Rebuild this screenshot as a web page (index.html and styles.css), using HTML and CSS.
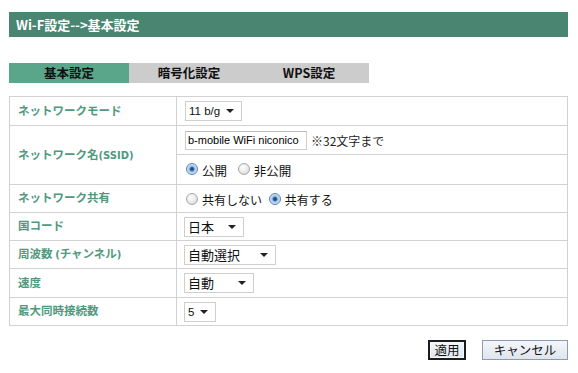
FILE: index.html
```html
<!DOCTYPE html>
<html lang="ja">
<head>
<meta charset="utf-8">
<title>基本設定</title>
<link rel="stylesheet" href="styles.css">
</head>
<body>
<div class="page">
  <div class="title">Wi-F設定--&gt;基本設定</div>
  <div class="tabs">
    <div class="tab active">基本設定</div>
    <div class="tab">暗号化設定</div>
    <div class="tab">WPS設定</div>
  </div>
  <table class="form">
    <tr class="r29">
      <td class="label">ネットワークモード</td>
      <td class="value"><span class="select w56"><span class="txt latin">11 b/g</span><span class="arrow"></span></span></td>
    </tr>
    <tr class="r29">
      <td class="label" rowspan="2">ネットワーク名<span class="latin-b">(SSID)</span></td>
      <td class="value"><span class="input">b-mobile WiFi niconico</span><span class="note">※32文字まで</span></td>
    </tr>
    <tr class="r30">
      <td class="value">
        <span class="radio on"></span><span class="rlabel">公開</span>
        <span class="radio"></span><span class="rlabel">非公開</span>
      </td>
    </tr>
    <tr class="r28">
      <td class="label">ネットワーク共有</td>
      <td class="value">
        <span class="radio"></span><span class="rlabel tight">共有しない</span>
        <span class="radio on"></span><span class="rlabel tight">共有する</span>
      </td>
    </tr>
    <tr class="r28">
      <td class="label">国コード</td>
      <td class="value"><span class="select w60"><span class="txt">日本</span><span class="arrow"></span></span></td>
    </tr>
    <tr class="r28">
      <td class="label">周波数 <span class="latin-b">(</span>チャンネル<span class="latin-b">)</span></td>
      <td class="value"><span class="select w92"><span class="txt">自動選択</span><span class="arrow"></span></span></td>
    </tr>
    <tr class="r29">
      <td class="label">速度</td>
      <td class="value"><span class="select w70"><span class="txt">自動</span><span class="arrow"></span></span></td>
    </tr>
    <tr class="r28">
      <td class="label">最大同時接続数</td>
      <td class="value"><span class="select w32"><span class="txt latin">5</span><span class="arrow"></span></span></td>
    </tr>
  </table>
  <div class="actions">
    <button class="btn primary">適用</button>
    <button class="btn cancel">キャンセル</button>
  </div>
</div>
</body>
</html>
```
FILE: styles.css
```css
* { box-sizing: border-box; }
body {
  margin: 0;
  background: #ffffff;
  font-family: "Noto Sans CJK JP", "DejaVu Sans", sans-serif;
  color: #111;
}
.page {
  width: 577px;
  padding: 12px 0 0 9px;
}
.title {
  width: 559px;
  height: 25px;
  background: #4a8571;
  color: #ffffff;
  font-weight: bold;
  font-size: 13px;
  line-height: 25px;
  padding-left: 7px;
}
.tabs {
  display: flex;
  width: 360px;
  margin-top: 26px;
}
.tab {
  width: 120px;
  height: 20px;
  line-height: 20px;
  background: #cccccc;
  font-size: 12.5px;
  font-weight: bold;
  text-align: center;
  color: #111;
}
.tab.active { background: #5aa68a; }
.form {
  margin-top: 13px;
  width: 559px;
  border-collapse: collapse;
  border: 1px solid #d2d2d2;
}
.form td {
  border: 1px solid #d2d2d2;
  padding: 0;
  vertical-align: middle;
}
.r28 td { height: 28px; }
.r29 td { height: 29px; }
.r30 td { height: 30px; }
.label {
  width: 167px;
  padding-left: 8px !important;
  color: #4f9a7e;
  font-weight: bold;
  font-size: 11.5px;
  padding-bottom: 3px !important;
}
.latin-b {
  font-family: "DejaVu Sans", sans-serif;
  font-size: 10px;
}
.value {
  padding-left: 7px !important;
  font-size: 12px;
}
.select {
  display: inline-flex;
  align-items: center;
  justify-content: space-between;
  height: 20px;
  border: 1px solid #cfcfcf;
  background: #fff;
  padding: 0 7px 0 3px;
  vertical-align: middle;
  font-size: 13px;
}
.select .txt { line-height: 18px; }
.latin {
  font-family: "Liberation Sans", sans-serif;
  font-size: 11.5px;
}
.arrow {
  flex: none;
  width: 0;
  height: 0;
  border-left: 4px solid transparent;
  border-right: 4px solid transparent;
  border-top: 4px solid #222;
}
.w56 { width: 57px; margin-left: 1px; }
.w60 { width: 60px; }
.w92 { width: 92px; }
.w70 { width: 70px; }
.w32 { width: 32px; }
.input {
  display: inline-block;
  width: 122px;
  height: 19px;
  border: 1px solid #cfcfcf;
  border-top-color: #b8b8b8;
  padding-left: 2px;
  font-family: "Liberation Sans", sans-serif;
  font-size: 11px;
  line-height: 17px;
  vertical-align: middle;
  margin-left: 1px;
  color: #000;
  overflow: hidden;
  white-space: nowrap;
}
.note {
  margin-left: 4px;
  font-size: 12px;
  vertical-align: middle;
  color: #222;
}
.radio {
  display: inline-block;
  width: 12px;
  height: 12px;
  border-radius: 50%;
  border: 1px solid #a9a9a9;
  background: radial-gradient(circle at 40% 35%, #ffffff 0, #e6e6e6 60%, #c9c9c9 100%);
  vertical-align: middle;
  margin: 0 4px 2px 2px;
}
.radio.on {
  border-color: #5d86ad;
  background: radial-gradient(circle at 50% 50%, #1a3f72 0, #2a5c96 22%, #9dc3ea 40%, #cfe3f7 70%, #eaf3fb 100%);
}
.rlabel {
  font-size: 12.5px;
  vertical-align: middle;
  margin-right: 6px;
  color: #111;
}
.rlabel.tight { font-size: 12px; margin-left: 0; margin-right: 2px; }
.actions {
  width: 559px;
  display: flex;
  justify-content: flex-end;
  gap: 16px;
  margin-top: 14px;
}
.btn {
  height: 20px;
  padding: 0;
  font-family: "Noto Sans CJK JP", sans-serif;
  font-size: 12.5px;
  line-height: 16px;
  color: #111;
  background: linear-gradient(#f4f7fa, #dfe5ec);
}
.btn.primary {
  width: 38px;
  border: 2px solid #1c1c1c;
  box-shadow: inset 0 0 0 1px #f5f8fb;
}
.btn.cancel {
  width: 86px;
  border: 1px solid #8c9cb0;
}
```
